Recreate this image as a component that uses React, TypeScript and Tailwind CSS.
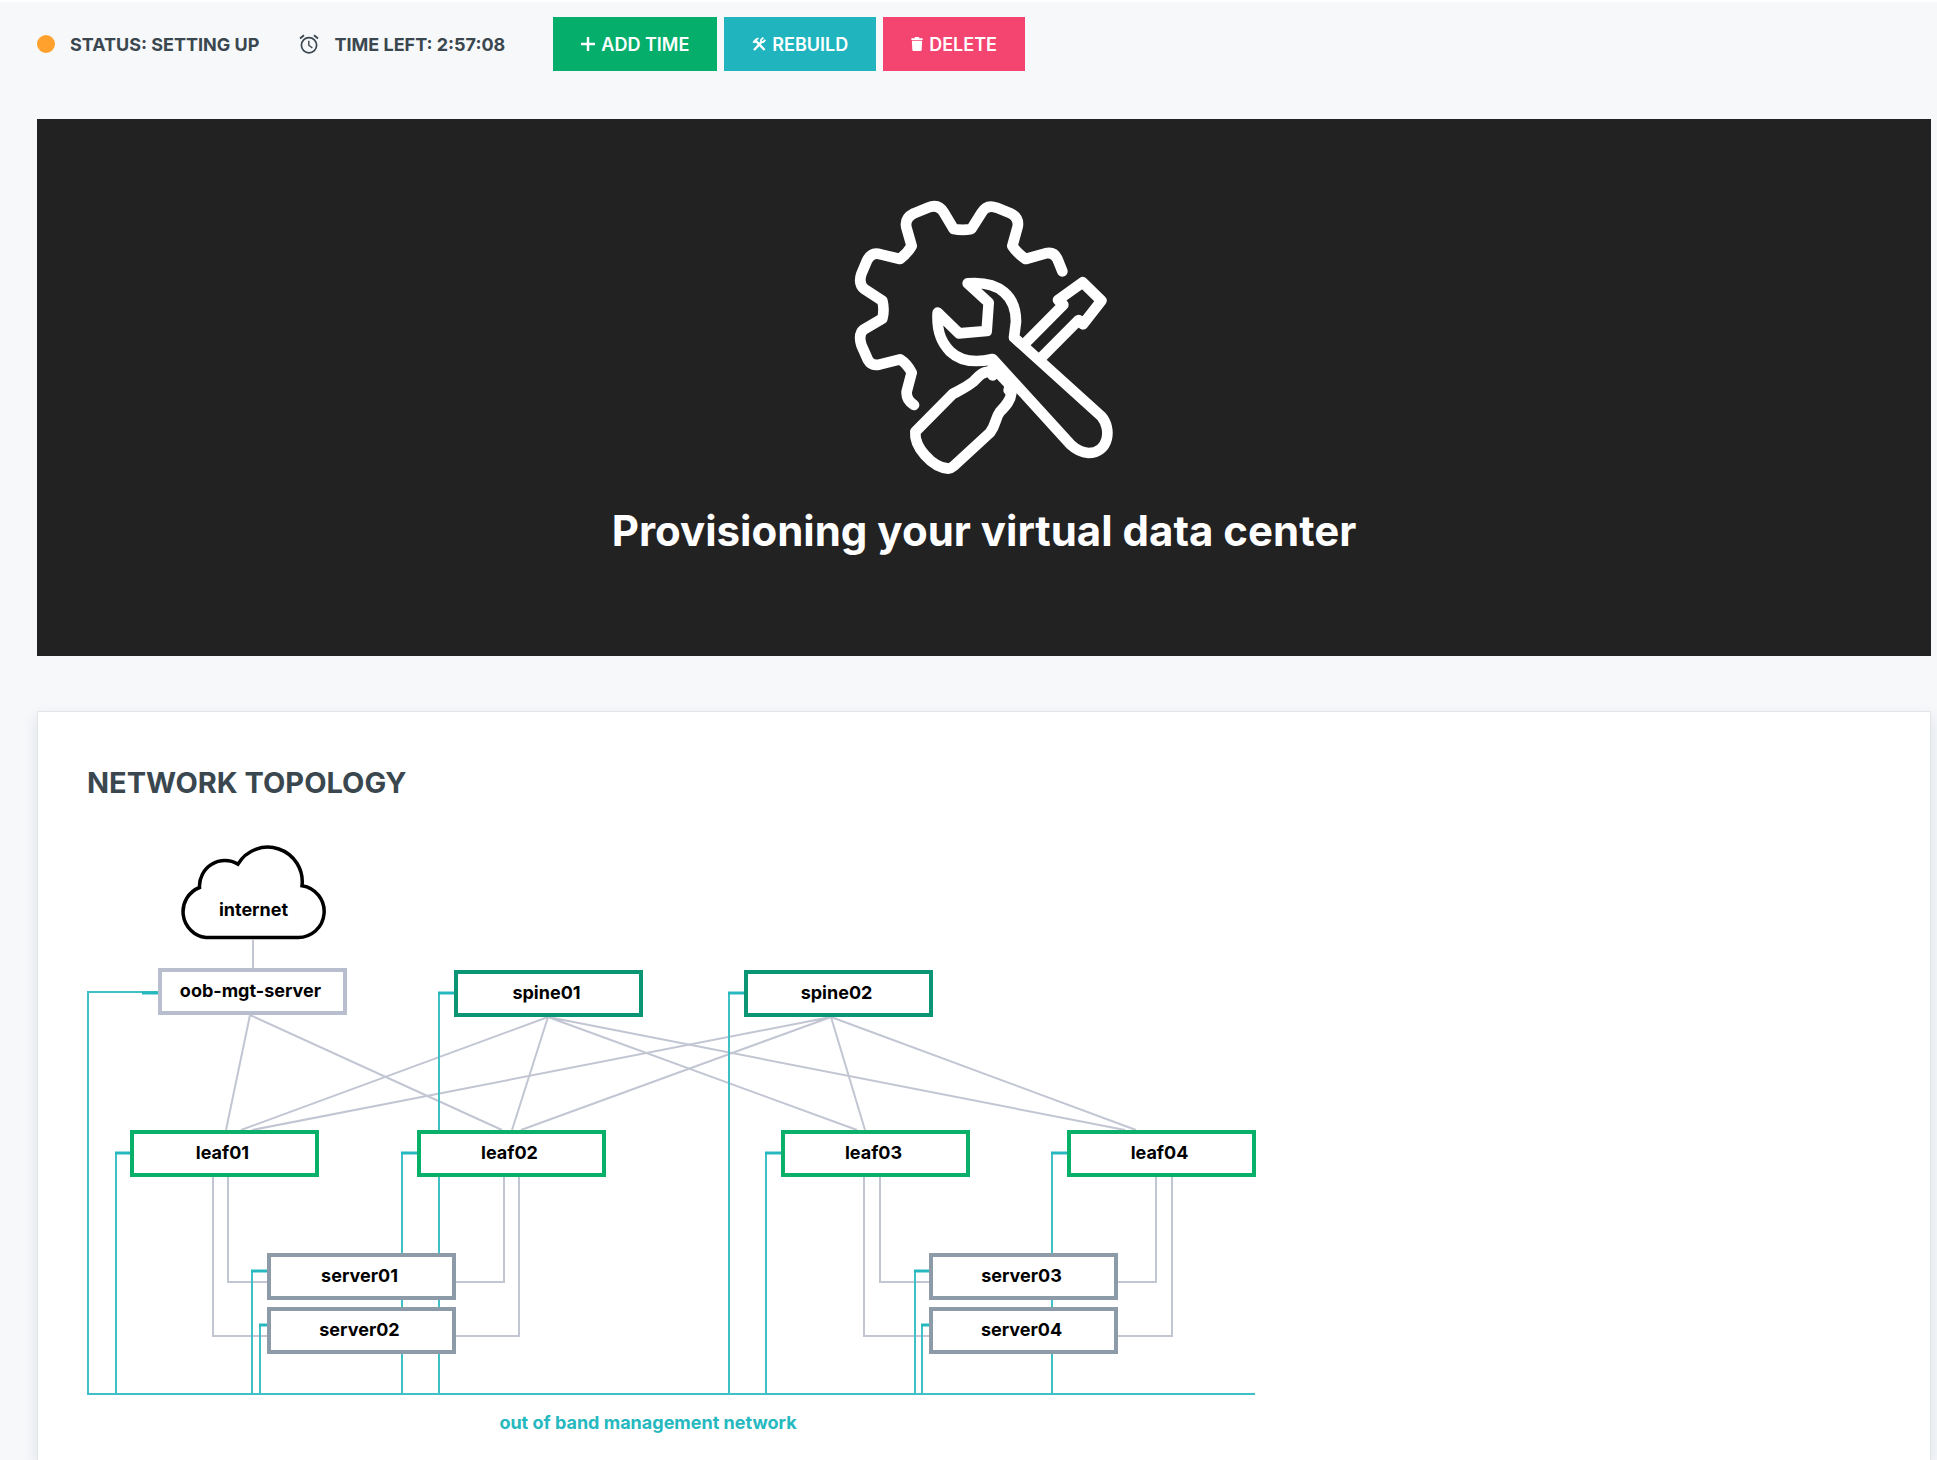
import type { ReactNode } from "react";

type Node = { name: string; box: string };

const nodes: Node[] = [
  { name: "oob-mgt-server", box: "left-[71px] top-[128px] border-[#b8becd]" },
  { name: "spine01", box: "left-[367px] top-[130px] border-[#0a9574]" },
  { name: "spine02", box: "left-[657px] top-[130px] border-[#0a9574]" },
  { name: "leaf01", box: "left-[43px] top-[290px] border-[#08b06a]" },
  { name: "leaf02", box: "left-[330px] top-[290px] border-[#08b06a]" },
  { name: "leaf03", box: "left-[694px] top-[290px] border-[#08b06a]" },
  { name: "leaf04", box: "left-[980px] top-[290px] border-[#08b06a]" },
  { name: "server01", box: "left-[180px] top-[413px] border-[#8c9ba7]" },
  { name: "server02", box: "left-[180px] top-[467px] border-[#8c9ba7]" },
  { name: "server03", box: "left-[842px] top-[413px] border-[#8c9ba7]" },
  { name: "server04", box: "left-[842px] top-[467px] border-[#8c9ba7]" },
];

const dataLinks = [
  "M166 100V128",
  "M163 175L139 290M163 175L415 290",
  "M461 177L154 290M461 177L425 290M461 177L770 290M461 177L1038 290",
  "M744 177L165 290M744 177L434 290M744 177L778 290M744 177L1049 290",
  "M126 336V496H181M141 336V442H181",
  "M368 442H417V336M368 496H432V336",
  "M777 336V496H843M793 336V442H843",
  "M1030 442H1069V336M1030 496H1085V336",
];

const oobDrops = [
  "M1 554V152H71",
  "M29 554V313",
  "M315 554V313",
  "M352 554V153",
  "M642 554V153",
  "M679 554V313",
  "M965 554V313",
  "M165 554V431",
  "M173 554V485",
  "M828 554V431",
  "M835 554V485",
];

const oobStubs = [
  "M55 153H72",
  "M28 313H44",
  "M314 313H331",
  "M351 153H368",
  "M641 153H658",
  "M678 313H695",
  "M964 313H981",
  "M164 431H181",
  "M172 485H181",
  "M827 431H843",
  "M834 485H843",
];

function ClockIcon() {
  return (
    <svg viewBox="0 0 20 20" className="size-5" fill="none" stroke="#3a474f" aria-hidden="true">
      <circle cx="10" cy="11.2" r="7.6" strokeWidth="1.7" />
      <path d="M9.8 6.8V11.2L13.4 14" strokeWidth="1.4" />
      <path d="M1 4.4L5 1.2M19 4.4L15 1.2" strokeWidth="1.9" />
    </svg>
  );
}

function PlusIcon() {
  return (
    <svg viewBox="0 0 14 14" className="size-3.5" stroke="white" strokeWidth="2.4" aria-hidden="true">
      <path d="M7 0V14M0 7H14" />
    </svg>
  );
}

function ToolsIcon() {
  return (
    <svg viewBox="0 0 14 14" className="size-3.5" fill="none" stroke="white" aria-hidden="true">
      <path d="M4.6 4.6L12.6 13" strokeWidth="2.4" />
      <path d="M2 13L9 5.6" strokeWidth="2.4" />
      <path d="M1 5.6L2.2 3.2L5.2 1.1L6.6 1.4L4.6 3.2L5 4.8L3.4 5.4Z" fill="white" strokeWidth="0.8" />
      <path d="M11.4 0.6L9 2.8V5H11.2L13.4 2.8" strokeWidth="1.8" />
    </svg>
  );
}

function TrashIcon() {
  return (
    <svg viewBox="0 0 12 14" className="h-3.5 w-3" fill="white" aria-hidden="true">
      <path d="M3.8 0H8.2V1.2H11.6V3H0.4V1.2H3.8Z" />
      <path d="M0.9 3.8H11.1L10.7 12.8Q10.6 14 9.6 14H2.4Q1.4 14 1.3 12.8Z" />
    </svg>
  );
}

function ProvisioningIcon() {
  return (
    <svg
      viewBox="-3 0 870 870"
      className="size-[290px]"
      fill="none"
      stroke="white"
      strokeWidth="32"
      strokeLinecap="round"
      strokeLinejoin="round"
      aria-hidden="true"
    >
      <path d="M667 244L655 214Q645 184 617 190L557 207Q532 190 517 168L533 110Q538 84 512 70L470 53Q440 42 425 68L394 117Q368 122 341 117L312 68Q295 40 264 53L222 70Q193 85 199 112L215 168Q202 190 180 207L122 193Q95 184 81 212L64 252Q54 282 74 298L127 332Q134 359 127 386L72 418Q54 432 64 465L84 510Q95 530 120 523L180 508Q202 522 215 548L200 605Q198 630 222 645" />
      <path d="M383 280C480 272 528 320 528 395L522 442L785 680C815 715 808 789 745 789C722 787 708 779 692 764L458 507C410 518 363 516 330 484C298 452 290 415 293 368L357 430L440 423L446 338Z" />
      <path d="M560 455L670 344L654 330L728 277L784 332L729 403L716 390L605 502" />
      <path d="M458 556L450 545C425 545 415 560 400 575C375 595 355 603 338 612L226 725C222 770 275 832 325 836Q332 836 340 829L450 728C470 700 465 685 480 665C500 645 512 630 514 610L506 600" />
      <path d="M458 530L514 590" />
    </svg>
  );
}

function ActionButton({ color, icon, children }: { color: string; icon: ReactNode; children: ReactNode }) {
  return (
    <button
      type="button"
      className={`flex h-[54px] items-center gap-1.5 px-7 text-[18px] font-semibold text-white ${color}`}
    >
      {icon}
      {children}
    </button>
  );
}

function Topology() {
  return (
    <div className="relative h-[596px] w-[1170px]">
      <svg viewBox="0 0 1170 596" className="absolute inset-0 size-full" fill="none" aria-hidden="true">
        <g stroke="#c2c6d3" strokeWidth="2">
          {dataLinks.map((d) => (
            <path key={d} d={d} />
          ))}
        </g>
        <g stroke="#3fc0c6" strokeWidth="2">
          {oobDrops.map((d) => (
            <path key={d} d={d} />
          ))}
          <path d="M0 554H1168" />
        </g>
        <g stroke="#26b8bf" strokeWidth="3">
          {oobStubs.map((d) => (
            <path key={d} d={d} />
          ))}
        </g>
        <path
          d="M119 97.5A26 26 0 0 1 112.5 47.5A25.5 25.5 0 0 1 151 24.2A34.5 34.5 0 0 1 215 45.8A26 26 0 0 1 210.3 97.5Z"
          fill="white"
          stroke="black"
          strokeWidth="3.5"
        />
      </svg>
      <span className="absolute left-[95px] top-[58px] w-[143px] text-center text-[18px] leading-6 font-bold">
        internet
      </span>
      {nodes.map(({ name, box }) => (
        <div
          key={name}
          className={`absolute flex h-[47px] w-[189px] items-center justify-center border-4 bg-white pr-1 pb-0.5 text-[18px] leading-6 font-bold ${box}`}
        >
          {name}
        </div>
      ))}
      <p className="absolute left-0 top-[571px] w-[1122px] text-center text-[18px] leading-6 font-bold text-[#26b8bf]">
        out of band management network
      </p>
    </div>
  );
}

export default function App() {
  return (
    <div className="flex min-h-screen flex-col border-t-2 border-white bg-[#f6f8fa] pr-1.5 pl-[37px] font-['Inter',sans-serif] text-black">
      <header className="flex items-center pt-[15px] text-[18px] font-bold text-[#3a474f]">
        <span className="size-[18px] rounded-full bg-[#ffa12c]" />
        <span className="ml-[15px]">STATUS: SETTING UP</span>
        <span className="ml-10 flex items-center gap-[15px]">
          <ClockIcon />
          TIME LEFT: 2:57:08
        </span>
        <div className="ml-12 flex gap-[7px]">
          <ActionButton color="bg-[#05ae6b]" icon={<PlusIcon />}>ADD TIME</ActionButton>
          <ActionButton color="bg-[#1fb4be]" icon={<ToolsIcon />}>REBUILD</ActionButton>
          <ActionButton color="bg-[#f3456f]" icon={<TrashIcon />}>DELETE</ActionButton>
        </div>
      </header>

      <section className="mt-12 flex flex-col items-center bg-[#222222] pt-[71px] pb-[101px] text-white">
        <ProvisioningIcon />
        <h1 className="mt-[27px] text-[42px] leading-[48px] font-bold">Provisioning your virtual data center</h1>
      </section>

      <section className="mt-[55px] flex-1 border border-b-0 border-[#e1e5e8] bg-white px-[49px] pt-[53px] pb-5 shadow-[0_6px_14px_rgba(60,80,100,0.13)]">
        <h2 className="text-[29px] leading-9 font-bold text-[#3a474f]">NETWORK TOPOLOGY</h2>
        <div className="mt-[39px]">
          <Topology />
        </div>
      </section>
    </div>
  );
}
